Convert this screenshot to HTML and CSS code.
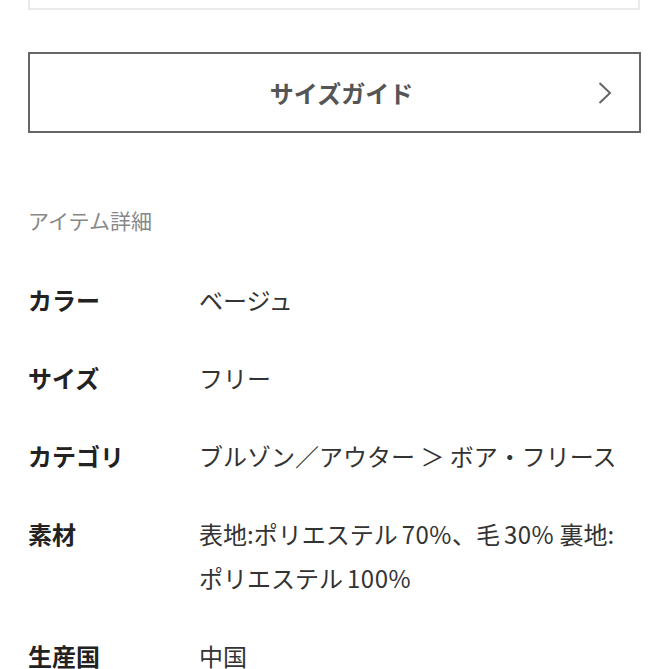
FILE: index.html
```html
<!DOCTYPE html>
<html lang="ja">
<head>
<meta charset="utf-8">
<link rel="stylesheet" href="styles.css">
</head>
<body>
<div class="page">
  <div class="prev-card"></div>
  <button class="size-guide">
    <span class="sg-spacer"></span>
    <span class="sg-label">サイズガイド</span>
    <svg class="sg-chevron" width="14" height="22" viewBox="0 0 14 22"><polyline points="1.5,1 12,11 1.5,21" fill="none" stroke="#666" stroke-width="2"/></svg>
  </button>
  <h2 class="section-title">アイテム詳細</h2>
  <dl class="details">
    <dt>カラー</dt><dd>ベージュ</dd>
    <dt>サイズ</dt><dd>フリー</dd>
    <dt>カテゴリ</dt><dd>ブルゾン／アウター ＞ ボア・フリース</dd>
    <dt>素材</dt><dd>表地:ポリエステル<span class="num">70%</span>、毛<span class="num">30%</span> 裏地:<br>ポリエステル<span class="num">100%</span></dd>
    <dt>生産国</dt><dd>中国</dd>
  </dl>
</div>
</body>
</html>
```

FILE: styles.css
```css
html, body {
  margin: 0;
  padding: 0;
  background: #fff;
}
body {
  font-family: "Noto Sans CJK JP", "Noto Sans", sans-serif;
  color: #333;
}
.page {
  padding: 0 28px;
}
.prev-card {
  height: 8px;
  border: 2px solid #e9e9e9;
  border-top: none;
  margin-right: 1px;
}
.size-guide {
  display: grid;
  grid-template-columns: 1fr auto 1fr;
  align-items: center;
  width: 100%;
  height: 81px;
  margin: 42px 0 0;
  padding: 0 27px 0 41px;
  background: #fff;
  border: 2px solid #666;
  font-family: inherit;
  box-sizing: border-box;
}
.sg-label {
  font-size: 24px;
  font-weight: 700;
  color: #555;
  line-height: 1;
}
.sg-chevron {
  justify-self: end;
  display: block;
}
.section-title {
  margin: 72px 0 0;
  font-size: 21px;
  line-height: 30px;
  font-weight: 400;
  color: #888;
}
.details {
  display: grid;
  grid-template-columns: 171px 1fr;
  row-gap: 34px;
  margin: 43px 0 0;
  font-size: 24px;
  line-height: 44px;
}
.details dt {
  font-weight: 700;
  color: #222;
}
.details dd {
  margin: 0;
  color: #333;
}
.num {
  margin-left: 4px;
  letter-spacing: 0.5px;
}
```
